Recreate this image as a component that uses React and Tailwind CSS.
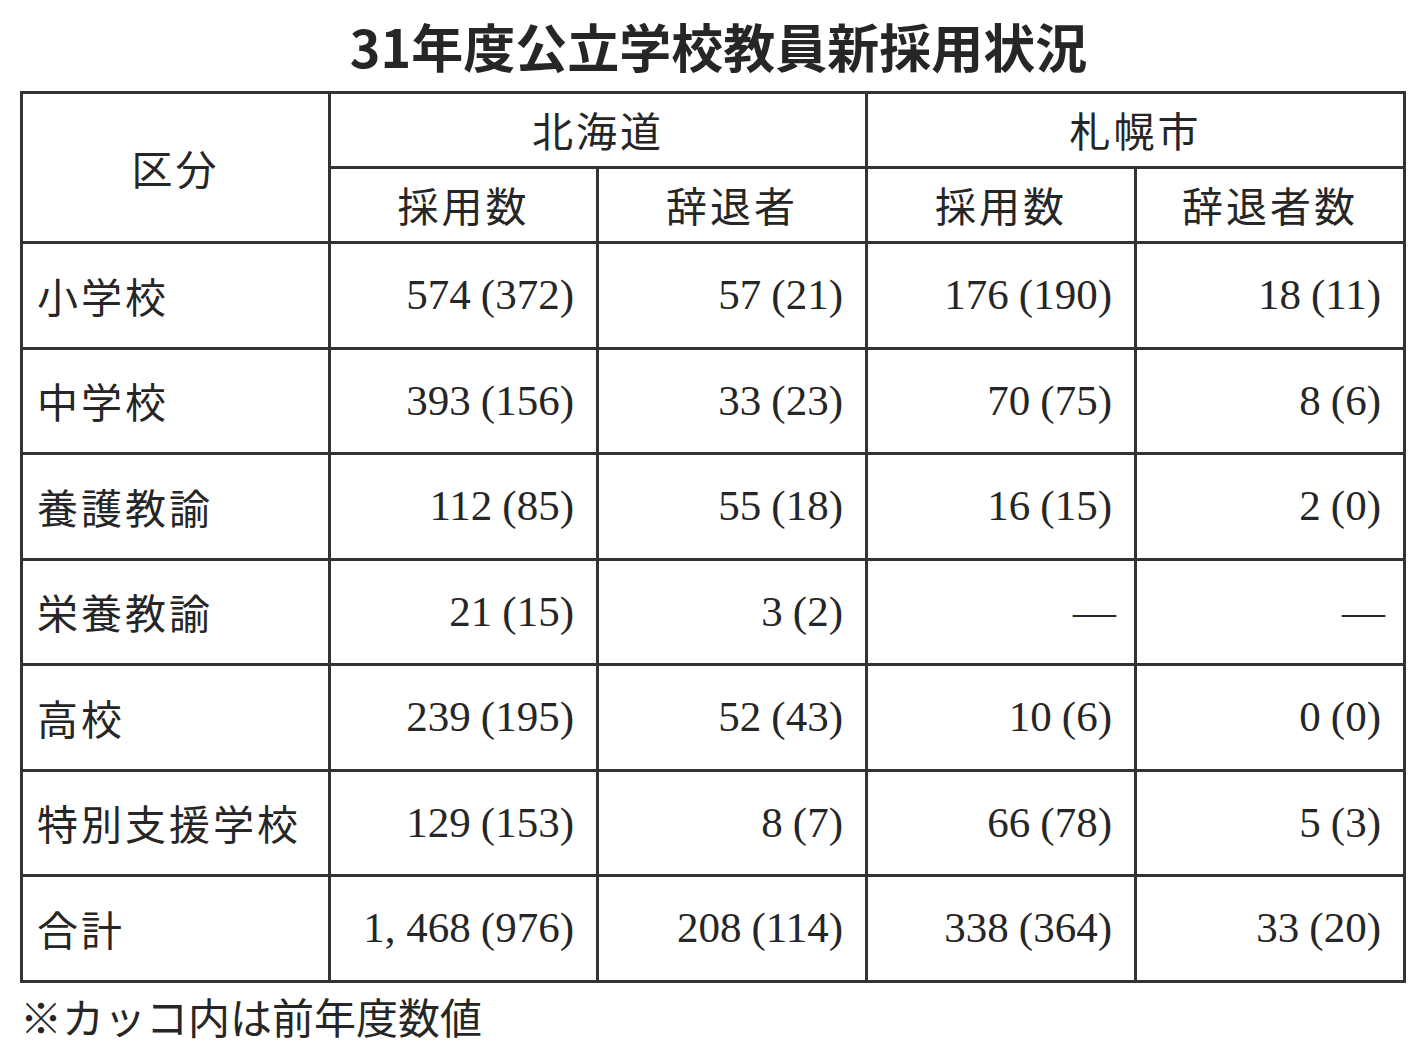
const rows = [
  { label: '小学校', h: 'h-[106px]', v: [['574', '372'], ['57', '21'], ['176', '190'], ['18', '11']] },
  { label: '中学校', h: 'h-[105px]', v: [['393', '156'], ['33', '23'], ['70', '75'], ['8', '6']] },
  { label: '養護教諭', h: 'h-[106px]', v: [['112', '85'], ['55', '18'], ['16', '15'], ['2', '0']] },
  { label: '栄養教諭', h: 'h-[105px]', v: [['21', '15'], ['3', '2'], null, null] },
  { label: '高校', h: 'h-[106px]', v: [['239', '195'], ['52', '43'], ['10', '6'], ['0', '0']] },
  { label: '特別支援学校', h: 'h-[105px]', v: [['129', '153'], ['8', '7'], ['66', '78'], ['5', '3']] },
  { label: '合計', h: 'h-[106px]', v: [['1, 468', '976'], ['208', '114'], ['338', '364'], ['33', '20']] },
];

const gothic = "font-['Noto_Sans_CJK_JP',sans-serif]";
const cell = 'border-[3px] border-[#333]';
const head = `${cell} font-normal text-[41px] tracking-[3px]`;

export default function App() {
  return (
    <div className={`w-[1417px] h-[1051px] bg-white text-[#262626] ${gothic}`}>
      <div className="h-[91px] flex items-center justify-center pl-[20px]">
        <h1 className="text-[52px] font-bold leading-none">31年度公立学校教員新採用状況</h1>
      </div>
      <div className="pl-[20px]">
        <table className="w-[1383px] table-fixed border-collapse">
          <colgroup>
            <col className="w-[308px]" />
            <col className="w-[268px]" />
            <col className="w-[269px]" />
            <col className="w-[269px]" />
            <col className="w-[269px]" />
          </colgroup>
          <thead>
            <tr className="h-[75px]">
              <th rowSpan={2} className={head}>区分</th>
              <th colSpan={2} className={head}>北海道</th>
              <th colSpan={2} className={head}>札幌市</th>
            </tr>
            <tr className="h-[75px]">
              <th className={head}>採用数</th>
              <th className={head}>辞退者</th>
              <th className={head}>採用数</th>
              <th className={head}>辞退者数</th>
            </tr>
          </thead>
          <tbody>
            {rows.map((r) => (
              <tr key={r.label} className={r.h}>
                <td className={`${cell} pl-[14px] text-[41px] tracking-[3px]`}>{r.label}</td>
                {r.v.map((val, i) => (
                  <td
                    key={i}
                    className={`${cell} text-right font-['Liberation_Serif',serif] text-[43px] ${val ? 'pr-[22px]' : 'pr-[18px]'}`}
                  >
                    {val ? (
                      <>
                        {val[0]}
                        <span className="ml-[10px]">({val[1]})</span>
                      </>
                    ) : (
                      '—'
                    )}
                  </td>
                ))}
              </tr>
            ))}
          </tbody>
        </table>
        <p className="mt-[12px] text-[42px] leading-none">※カッコ内は前年度数値</p>
      </div>
    </div>
  );
}
